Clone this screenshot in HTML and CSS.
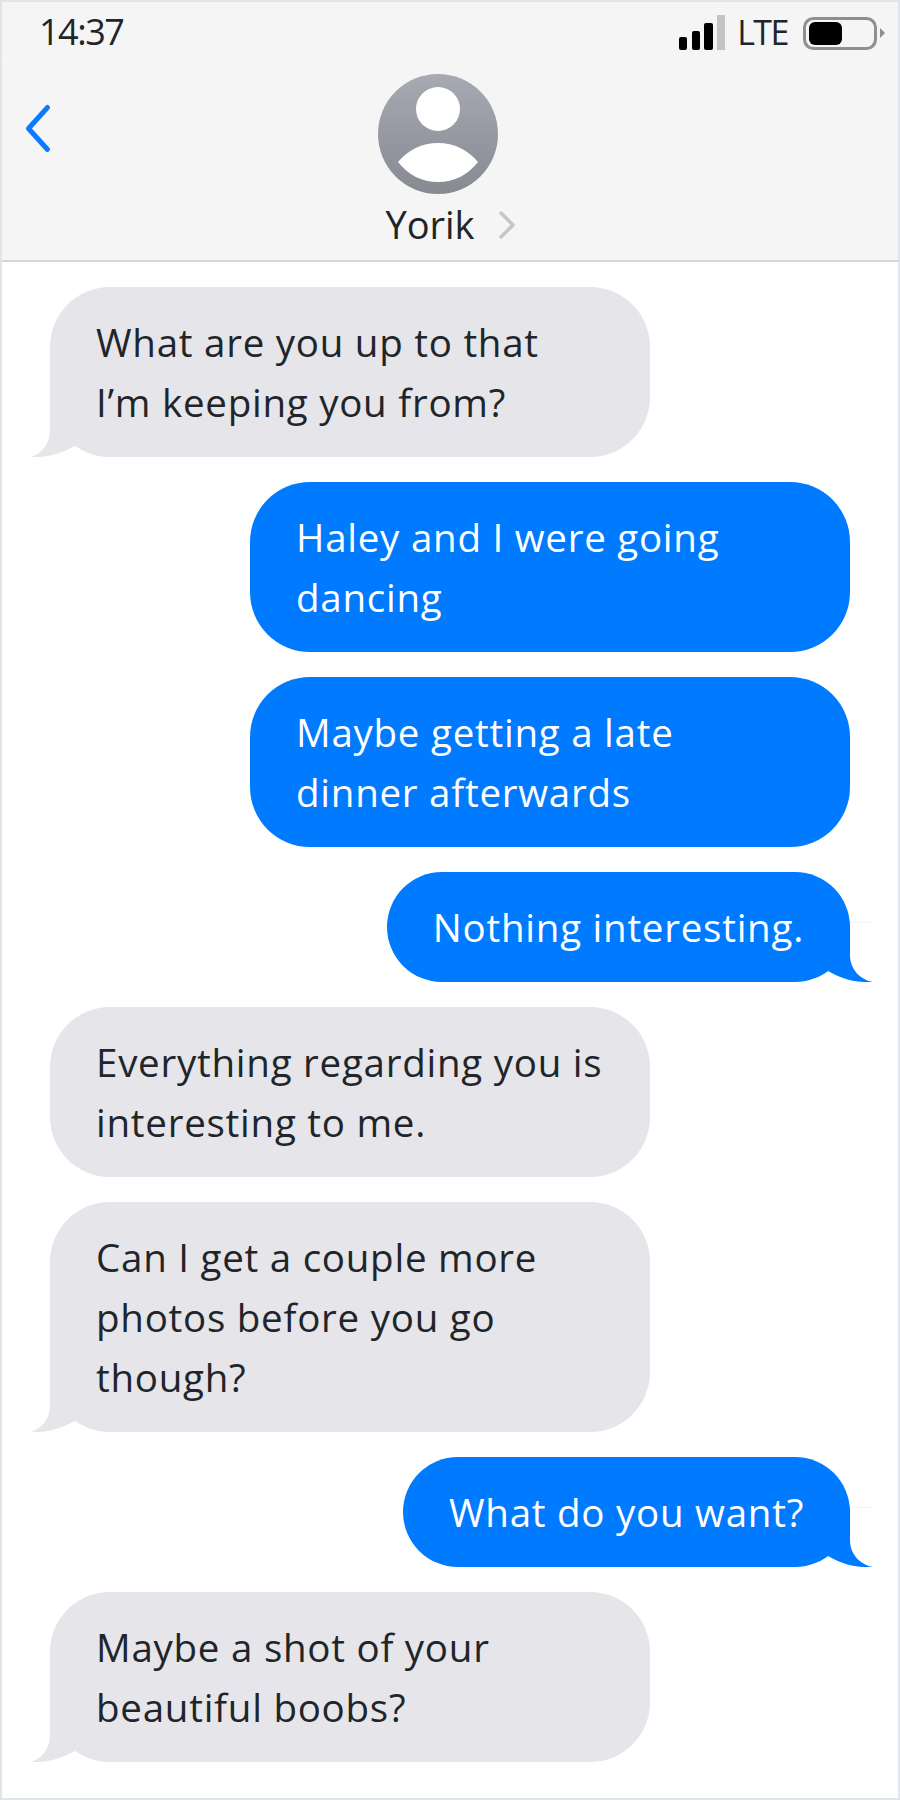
FILE: index.html
```html
<!DOCTYPE html>
<html lang="en">

<head>
    <meta charset="UTF-8">
    <meta name="viewport" content="width=device-width, initial-scale=1.0">
    <title>Messages</title>
    <link rel="stylesheet" href="styles.css">
</head>

<body>

    <div class="phone">
        <header class="top">
            <div class="status">
                <span class="time">14:37</span>
                <div class="status-right">
                    <svg class="signal" width="46" height="36" viewBox="0 0 46 36">
                        <rect x="0" y="23" width="8" height="13" rx="2" fill="#000"/>
                        <rect x="13" y="17" width="8" height="19" rx="2" fill="#000"/>
                        <rect x="25" y="9" width="9" height="27" rx="2" fill="#000"/>
                        <rect x="38" y="1" width="8" height="35" fill="#c4c4c4"/>
                    </svg>
                    <span class="lte">LTE</span>
                    <svg class="battery" width="84" height="36" viewBox="0 0 84 36">
                        <rect x="2.5" y="4.5" width="71" height="30" rx="9" fill="none" stroke="#8f8f8f" stroke-width="3"/>
                        <rect x="7" y="8" width="33" height="23" rx="6" fill="#000"/>
                        <path d="M78 14 L83 19 L78 24 Z" fill="#8f8f8f"/>
                    </svg>
                </div>
            </div>
            <div class="nav">
                <svg class="back" width="30" height="56" viewBox="0 0 30 56">
                    <path d="M23.5 6.5 L4.5 27.5 L23.5 48.5" fill="none" stroke="#0a7aff" stroke-width="5" stroke-linecap="round" stroke-linejoin="round"/>
                </svg>
                <svg class="avatar" width="120" height="120" viewBox="0 0 120 120">
                    <defs>
                        <linearGradient id="avatarBg" x1="0" y1="0" x2="0" y2="1">
                            <stop offset="0" stop-color="#a7a9b3"/>
                            <stop offset="1" stop-color="#888a92"/>
                        </linearGradient>
                    </defs>
                    <circle cx="60" cy="60" r="60" fill="url(#avatarBg)"/>
                    <circle cx="60" cy="35" r="22" fill="#fff"/>
                    <path d="M20 88 C30 76 44 69 60 69 C76 69 90 76 100 88 C90 101 76 108 60 108 C44 108 30 101 20 88 Z" fill="#fff"/>
                </svg>
                <div class="name">
                    <span>Yorik</span>
                    <svg class="chevron" width="16" height="28" viewBox="0 0 16 28">
                        <path d="M2 2 L14 14 L2 26" fill="none" stroke="#c6c6c8" stroke-width="3.5" stroke-linecap="round" stroke-linejoin="round"/>
                    </svg>
                </div>
            </div>
        </header>

        <section class="messages">
            <div class="bubble in">What are you up to that<br>I’m keeping you from?
                <svg class="tail-shape" width="60" height="60" viewBox="0 0 60 60"><path d="M20 0 L20 33 C20 48 10 58 0 60 C18 61 32 56 45 49 Z"/></svg>
            </div>
            <div class="bubble out wide">Haley and I were going<br>dancing</div>
            <div class="bubble out wide">Maybe getting a late<br>dinner afterwards</div>
            <div class="bubble out">Nothing interesting.
                <svg class="tail-shape" width="63" height="60" viewBox="0 0 63 60"><path d="M23 0 L23 33 C23 48 12 58 0 60 C20 61 33 56 45 49 Z"/><rect width="23" height="1" fill="#eef6ff"/></svg>
            </div>
            <div class="bubble in">Everything regarding you is<br>interesting to me.</div>
            <div class="bubble in">Can I get a couple more<br>photos before you go<br>though?
                <svg class="tail-shape" width="60" height="60" viewBox="0 0 60 60"><path d="M20 0 L20 33 C20 48 10 58 0 60 C18 61 32 56 45 49 Z"/></svg>
            </div>
            <div class="bubble out">What do you want?
                <svg class="tail-shape" width="63" height="60" viewBox="0 0 63 60"><path d="M23 0 L23 33 C23 48 12 58 0 60 C20 61 33 56 45 49 Z"/><rect width="23" height="1" fill="#eef6ff"/></svg>
            </div>
            <div class="bubble in">Maybe a shot of your<br>beautiful boobs?
                <svg class="tail-shape" width="60" height="60" viewBox="0 0 60 60"><path d="M20 0 L20 33 C20 48 10 58 0 60 C18 61 32 56 45 49 Z"/></svg>
            </div>
        </section>
    </div>

</body>

</html>
```

FILE: styles.css
```css
body {
    margin: 0;
    padding: 0;
    background-color: #fff;
    font-family: "Open Sans", sans-serif;
    color: #212529;
}

.phone {
    box-sizing: border-box;
    width: 900px;
    height: 1800px;
    border: 2px solid #e1e5ea;
    overflow: hidden;
}

.top {
    background-color: #f5f5f5;
    border-bottom: 2px solid #d6d6d6;
}

.status {
    display: flex;
    justify-content: space-between;
    align-items: center;
    height: 60px;
    padding: 0 12px 0 37px;
    box-sizing: border-box;
    border-bottom: 1px solid #f8f8f8;
}

.time {
    font-size: 36px;
    letter-spacing: -1.5px;
}

.status-right {
    display: flex;
    align-items: center;
}

.lte {
    font-size: 34px;
    letter-spacing: -1.5px;
    margin: 0 14px 0 12px;
}

.nav {
    position: relative;
    height: 198px;
    padding-top: 12px;
    box-sizing: border-box;
    display: flex;
    flex-direction: column;
    align-items: center;
}

.back {
    position: absolute;
    left: 22px;
    top: 39px;
}

.avatar {
    display: block;
    margin-left: -24px;
}

.name {
    display: flex;
    align-items: center;
    gap: 24px;
    font-size: 38px;
    line-height: 60px;
}

.chevron {
    margin-top: 2px;
}

.messages {
    display: flex;
    flex-direction: column;
    gap: 25px;
    padding: 25px 48px 0;
}

.bubble {
    position: relative;
    box-sizing: border-box;
    padding: 25px 46px;
    border-radius: 60px;
    font-size: 38.5px;
    letter-spacing: 0.75px;
    line-height: 60px;
    white-space: nowrap;
}

.in {
    width: 600px;
    align-self: flex-start;
    background-color: #e5e5ea;
}

.out {
    align-self: flex-end;
    background-color: #007aff;
    color: #fff;
}

.wide {
    width: 600px;
}

.tail-shape {
    position: absolute;
    bottom: 0;
    left: -20px;
    fill: #e5e5ea;
}

.out .tail-shape {
    left: auto;
    right: -23px;
    transform: scaleX(-1);
    fill: #007aff;
}
```
